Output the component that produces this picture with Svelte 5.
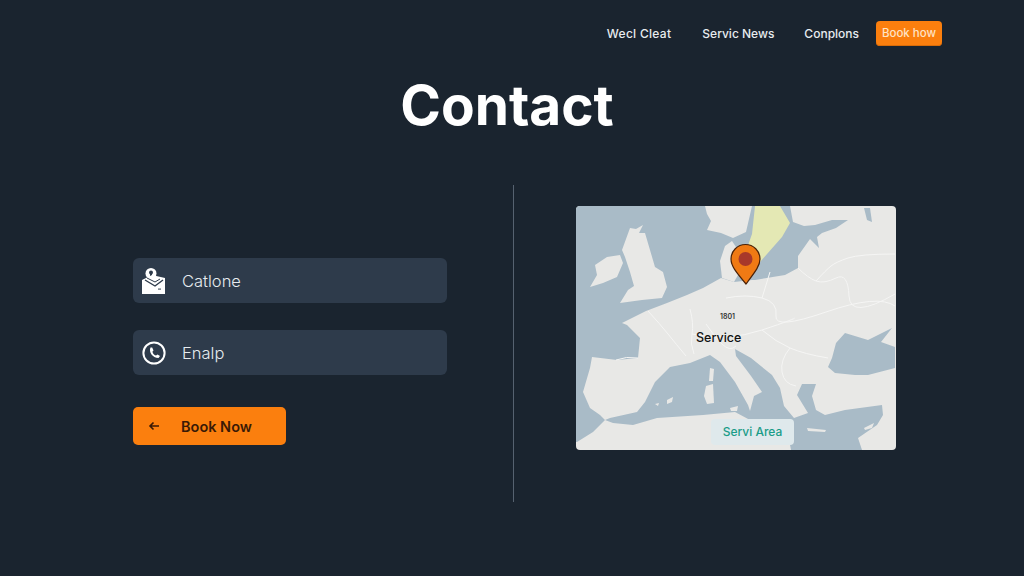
<script>
	const navLinks = ['Wecl Cleat', 'Servic News', 'Conplons'];

	const land = [
		// Ireland, UK
		'M19 59L31 51L44 49L47 57L41 71L27 77L14 81L21 69Z',
		'M54 22L60 23L67 19L63 27L69 27L74 44L79 61L87 66L91 81L86 92L66 94L44 97L52 84L58 80L54 66L49 51L46 44Z',
		// Norway, Denmark
		'M129 0L131 8L135 15L131 24L145 27L157 32L170 26L176 0Z',
		'M156 35L149 40L144 55L146 72L158 76L166 62L162 44Z',
		// Corsica, Sardinia, Balearics, Sicily
		'M134 162L138 163L137 175L133 175Z',
		'M130 180L137 178L138 197L131 198L128 190Z',
		'M79 198L83 197L82 200Z',
		'M91 194L97 191L96 196L91 198Z',
		'M154 202L162 200L161 205L155 205Z',
		// Crete, Cyprus
		'M231 222L250 224L249 226L232 225Z',
		'M288 222L298 217L296 222L289 224Z'
	];

	const borders = [
		'M72 105Q84 118 92 128T110 150',
		'M114 103Q118 118 116 128T118 148',
		'M116 128Q150 136 186 124T218 112',
		'M150 92Q170 88 186 92T200 110T250 106T319 100',
		'M186 92L194 66',
		'M222 62Q232 72 240 75T260 72T273 90T319 88',
		'M186 124Q200 136 214 142T252 152',
		'M214 142Q204 154 206 166T220 180',
		'M40 154Q50 150 62 152',
		'M130 118Q138 130 146 138T160 140',
		'M240 75Q250 64 255 60T272 52T319 48'
	];
</script>

<div class="page">
	<nav class="topnav">
		{#each navLinks as link}
			<span class="navlink">{link}</span>
		{/each}
		<span class="navbtn">Book how</span>
	</nav>

	<h1 class="title">Contact</h1>

	<main class="content">
		<section class="left">
			<div class="row">
				<svg class="icon" viewBox="0 0 26 28" width="26" height="28">
					<circle cx="10" cy="6.500" r="5.500" fill="#fff" />
					<circle cx="10" cy="5.500" r="2" fill="#2e3b4b" />
					<rect x="9" y="6" width="2" height="4" fill="#2e3b4b" />
					<path d="M1 13L11 8L24 11V27H1Z" fill="#fff" />
					<path d="M4 13L14 19L22 13" fill="none" stroke="#2e3b4b" stroke-width="1.400" />
					<path d="M6 11L14 15L19 12" fill="none" stroke="#2e3b4b" stroke-width="1" />
					<rect x="17" y="21.500" width="3" height="1.200" fill="#55616e" />
				</svg>
				<span>Catlone</span>
			</div>
			<div class="row">
				<svg class="icon" viewBox="0 0 26 26" width="26" height="26">
					<circle cx="13" cy="13" r="10.600" fill="none" stroke="#fff" stroke-width="2" />
					<path d="M9.500 7.500C7.500 12 11.500 18 17.500 18L19 16L16.500 14.500L15 15.500C13 15 11.500 13 11.500 11.500L12.500 10.500L11.200 7.500Z" fill="#fff" />
				</svg>
				<span>Enalp</span>
			</div>
			<button class="book">
				<svg viewBox="0 0 12 10" width="12" height="10">
					<path d="M11 5H2M5.500 1.500L2 5L5.500 8.500" fill="none" stroke="#3a1a06" stroke-width="1.600" />
				</svg>
				<span>Book Now</span>
			</button>
		</section>

		<div class="divider"></div>

		<section class="right">
			<div class="map">
				<svg viewBox="0 0 320 244" width="320" height="244">
					<rect width="320" height="244" fill="#e8e8e6" />
					<!-- Atlantic and North Sea -->
					<path fill="#a9bbc7" d="M0 0H180V30L176 74L158 76L145 72L127 82L111 89L91 97L70 105L46 117L51 119L64 132L62 152L41 154L16 151L14 162L7 186L14 202L24 209L29 214L17 226L1 236L0 236Z" />
					<!-- Baltic -->
					<path fill="#a9bbc7" d="M204 0H214L217 16L228 20L239 19L256 14L272 14L260 22L246 27L241 31L243 42L234 33L222 50L222 62L209 69L179 74L176 74L170 45L184 56Z" />
					<path fill="#a9bbc7" d="M288 2L294 2L296 16L291 14Z" />
					<!-- Sweden -->
					<path fill="#e4e8b4" d="M179 0H204L214 17L206 31L184 56L178 58L170 45L176 28Z" />
					<!-- Mediterranean, Italy and Greece left as land -->
					<path fill="#a9bbc7" d="M29 214L34 212L61 206L69 196L79 176L94 161L114 157L134 149L144 156L159 176L172 199L174 205L178 190L186 186L175 170L160 150L159 143L175 152L196 169L204 182L208 200L218 212L232 207L221 189L226 178L240 178L236 190L240 204L249 209L269 204L306 199L307 209L301 219L282 232L286 244H215L210 218L174 214L159 206L127 209L81 212L57 219L37 217Z" />
					<!-- Black Sea -->
					<path fill="#a9bbc7" d="M256 152L260 137L269 127L292 134L296 132L316 122L305 136L319 141L319 162L292 169L279 169L259 167L252 161Z" />
					{#each land as d}
						<path fill="#e8e8e6" {d} />
					{/each}
					{#each borders as d}
						<path fill="none" stroke="#f5f5f4" stroke-width="1" {d} />
					{/each}
					<path d="M170 78C160 66 155 60 155 53A14.500 14.500 0 0 1 184 53C184 60 179 66 170 78Z" fill="#f07a14" stroke="#4a2208" stroke-width="1.200" />
					<circle cx="169.500" cy="53" r="7" fill="#a8382a" />
				</svg>
				<span class="code">1801</span>
				<span class="place">Service</span>
				<span class="pill">Servi Area</span>
			</div>
		</section>
	</main>
</div>

<style>
	:global(body) {
		background: #1a242f;
	}

	.page {
		height: 576px;
		overflow: hidden;
		background: #1a242f;
		font-family: Inter, "Liberation Sans", sans-serif;
	}

	.topnav {
		display: flex;
		justify-content: flex-end;
		align-items: center;
		height: 25px;
		padding: 21px 82px 0 0;
	}

	.navlink {
		margin-right: 30px;
		color: #e8ecef;
		font-size: 12px;
		font-weight: 500;
	}

	.navlink:first-child {
		margin-right: 31px;
		letter-spacing: 0.300px;
	}

	.navbtn {
		margin-left: -13px;
		width: 66px;
		height: 25px;
		line-height: 25px;
		text-align: center;
		border-radius: 4px;
		background: #fb7f0e;
		box-shadow: inset 0 -1px 0 #d96c0a;
		color: #ffe3c4;
		font-size: 11.500px;
		font-weight: 500;
	}

	.title {
		margin: 24px 0 0;
		padding-right: 10px;
		height: 70px;
		line-height: 70px;
		text-align: center;
		color: #fff;
		font-size: 55px;
		font-weight: 700;
	}

	.content {
		display: flex;
		margin-top: 45px;
		height: 317px;
	}

	.left {
		display: flex;
		flex-direction: column;
		align-items: flex-start;
		box-sizing: border-box;
		padding: 73px 0 0 133px;
		flex: none;
		width: 513px;
	}

	.row {
		display: flex;
		align-items: center;
		width: 314px;
		height: 45px;
		margin-bottom: 27px;
		padding-left: 8px;
		box-sizing: border-box;
		border-radius: 6px;
		background: #2e3b4b;
		color: #e6ebef;
		font-size: 16.500px;
		font-weight: 300;
	}

	.icon {
		margin-right: 15px;
		flex: none;
	}

	.book {
		display: flex;
		align-items: center;
		gap: 21px;
		width: 153px;
		height: 38px;
		margin-top: 5px;
		padding: 0 0 0 15px;
		border: none;
		border-radius: 5px;
		background: #fb7f0e;
		color: #3a1a06;
		font-family: inherit;
		font-size: 14.500px;
		font-weight: 600;
	}

	.divider {
		width: 1px;
		background: #566270;
		flex: none;
	}

	.right {
		padding: 21px 0 0 62px;
	}

	.map {
		position: relative;
		width: 320px;
		height: 244px;
		overflow: hidden;
		border-radius: 4px;
	}

	.map svg {
		display: block;
	}

	.code {
		position: absolute;
		left: 144px;
		top: 106px;
		color: #333;
		font-size: 7px;
		font-weight: 600;
	}

	.place {
		position: absolute;
		left: 120px;
		top: 124px;
		color: #111;
		font-size: 12.500px;
		font-weight: 500;
	}

	.pill {
		position: absolute;
		left: 135px;
		top: 213px;
		width: 83px;
		height: 26px;
		line-height: 26px;
		text-align: center;
		border-radius: 4px;
		background: #dfe9ec;
		color: #1b9c88;
		font-size: 12px;
		font-weight: 500;
	}
</style>
